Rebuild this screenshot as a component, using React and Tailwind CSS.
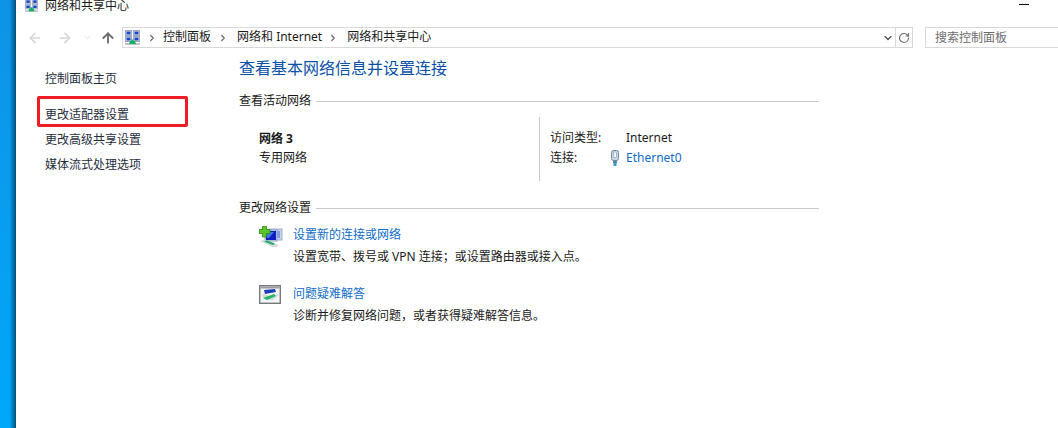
import { ArrowLeft, ArrowRight, ArrowUp, ChevronDown, ChevronRight, RotateCw } from "lucide-react";

const NetworkIcon = ({ className }) => (
  <svg viewBox="0 0 15 15" className={className}>
    <rect x="0.5" y="0.5" width="6" height="5" fill="#e4e9f3" stroke="#9aa6bd" />
    <rect x="1.5" y="1.5" width="4" height="3" fill="#1b46c4" />
    <rect x="8.5" y="0.5" width="6" height="5" fill="#e4e9f3" stroke="#9aa6bd" />
    <rect x="9.5" y="1.5" width="4" height="3" fill="#1b46c4" />
    <rect x="0.5" y="6.5" width="6" height="5" fill="#e4e9f3" stroke="#9aa6bd" />
    <rect x="1.5" y="7.5" width="4" height="3" fill="#1b46c4" />
    <rect x="8.5" y="6.5" width="6" height="5" fill="#e4e9f3" stroke="#9aa6bd" />
    <rect x="9.5" y="7.5" width="4" height="3" fill="#1b46c4" />
    <rect x="0" y="13" width="15" height="2" fill="#c2c6cb" />
    <path d="M6.5 9.5h2V11h1.5l1 3H4l1-3h1.5z" fill="#12b35c" />
  </svg>
);

const PlugIcon = ({ className }) => (
  <svg viewBox="0 0 10 16" className={className}>
    <rect x="1.5" y="0.5" width="7" height="10" rx="2" fill="#c9d6e6" stroke="#7389a8" />
    <rect x="3.5" y="2" width="3" height="5.5" fill="#f2f5f9" stroke="#8a9bb3" strokeWidth="0.6" />
    <rect x="3" y="10.5" width="4" height="2.5" fill="#5a83a8" />
    <rect x="3.5" y="13" width="3" height="3" fill="#2f9fd8" />
  </svg>
);

const NewConnectionIcon = ({ className }) => (
  <svg viewBox="0 0 24 21" className={className}>
    <rect x="11" y="3" width="12" height="11" fill="#c3d2ec" stroke="#9fb0cc" />
    <rect x="13" y="5" width="8" height="7" fill="#7f9fe0" />
    <rect x="6" y="4" width="12" height="11" fill="#d5def0" stroke="#8c9dbb" />
    <path d="M7 5h10v9H7z" fill="#0d1fc0" />
    <path d="M8 6h7l-5 6H8z" fill="#3f74ee" />
    <path d="M3.5 0h4v3.5H11v4H7.5V11h-4V7.5H0v-4h3.5z" fill="#57c728" stroke="#2c8a18" strokeWidth="0.8" />
    <path d="M1 15l4-1 15 5-3 2h-4z" fill="#d4d8dc" />
    <path d="M5 15.5l3-1 8 3-2 1.5z" fill="#1fae5e" />
  </svg>
);

const TroubleshootIcon = ({ className }) => (
  <svg viewBox="0 0 22 19" className={className}>
    <rect x="0.7" y="0.7" width="20.6" height="17.6" fill="#f4f5f6" stroke="#75797e" strokeWidth="1.4" />
    <rect x="1.5" y="1.5" width="19" height="2" fill="#9a9ea3" />
    <path d="M5 5l11-1 1 3-11 2z" fill="#1b3fb8" />
    <path d="M2 10l3-1 8 3 5-3 2 1-6 5H7z" fill="#d8dbdd" />
    <path d="M4 13l11-4 2 2-9 4z" fill="#22b866" />
  </svg>
);

const SideLink = ({ children, className = "" }) => (
  <a className={`block h-[17px] leading-[17px] text-[#1f2d3d] ${className}`}>{children}</a>
);

const SectionTitle = ({ children }) => (
  <div className="flex items-center gap-[5px] h-[17px] leading-[17px] w-[580px]">
    <span className="text-[#1a1a1a]">{children}</span>
    <div className="flex-1 h-px bg-[#c8c8c8] mt-[2px]" />
  </div>
);

const TaskRow = ({ icon, title, desc }) => (
  <div className="flex ml-[20px]">
    <div className="w-[34px] shrink-0">{icon}</div>
    <div>
      <div className="h-[17px] leading-[17px] text-[#0f6cc8]">{title}</div>
      <div className="h-[17px] leading-[17px] mt-[5px] text-[#1a1a1a]">{desc}</div>
    </div>
  </div>
);

export default function App() {
  return (
    <div
      className="flex w-[1058px] h-[428px] overflow-hidden bg-white text-[12px]"
      style={{ fontFamily: '"Noto Sans", "Noto Sans CJK SC", sans-serif' }}
    >
      {/* desktop strip */}
      <div className="w-[16px] shrink-0 bg-gradient-to-b from-[#0e93e6] to-[#00a8fa]">
        <div className="h-full bg-gradient-to-r from-transparent from-60% to-[#00507a]" />
      </div>

      <div className="flex-1 min-w-0">
        {/* title bar */}
        <div className="flex h-[12px] pl-[9px] pr-[29px]">
          <NetworkIcon className="w-[13px] h-[13px] -mt-[1px]" />
          <span className="ml-[7px] h-[12px] leading-[12px] text-[#1a1a1a]">网络和共享中心</span>
          <div className="ml-auto w-[10px] h-px bg-black mt-[4px]" />
        </div>

        {/* nav bar */}
        <div className="flex items-center h-[21px] mt-[15px]">
          <div className="flex items-center w-[106px] pl-[11px]">
            <ArrowLeft className="w-[16px] h-[16px] text-[#d6d6d6]" strokeWidth={2.4} />
            <ArrowRight className="w-[16px] h-[16px] ml-[14px] text-[#d6d6d6]" strokeWidth={2.4} />
            <ChevronDown className="w-[9px] h-[9px] ml-[10px] text-[#d6d6d6]" />
            <ArrowUp className="w-[16px] h-[16px] ml-[8px] text-[#6d6d6d]" strokeWidth={2.8} />
          </div>
          <div className="flex items-center w-[791px] h-[21px] border border-[#d9d9d9] leading-[17px]">
            <NetworkIcon className="ml-[2px] w-[15px] h-[15px]" />
            <ChevronRight className="ml-[7px] w-[10px] h-[10px] text-[#6d6d6d]" strokeWidth={3} />
            <span className="ml-[6px] -mt-[2px] text-[#1a1a1a]">控制面板</span>
            <ChevronRight className="ml-[7px] w-[10px] h-[10px] text-[#6d6d6d]" strokeWidth={3} />
            <span className="ml-[9px] -mt-[2px] text-[#1a1a1a]">网络和 Internet</span>
            <ChevronRight className="ml-[6px] w-[10px] h-[10px] text-[#6d6d6d]" strokeWidth={3} />
            <span className="ml-[9px] -mt-[2px] text-[#1a1a1a]">网络和共享中心</span>
            <ChevronDown className="ml-auto mr-[1px] w-[12px] h-[12px] text-[#5a5a5a]" strokeWidth={3} />
            <div className="flex items-center justify-center w-[17px] h-full border-l border-[#d9d9d9]">
              <RotateCw className="w-[12px] h-[12px] text-[#6d6d6d]" strokeWidth={2.4} />
            </div>
          </div>
          <div className="flex items-center flex-1 h-[21px] ml-[12px] pl-[9px] border border-r-0 border-[#d9d9d9] text-[#6d6d6d]">
            搜索控制面板
          </div>
        </div>

        <div className="flex">
          {/* sidebar */}
          <div className="relative w-[223px] shrink-0 pl-[29px] pt-[22px]">
            <SideLink>控制面板主页</SideLink>
            <SideLink className="mt-[19px]">更改适配器设置</SideLink>
            <SideLink className="mt-[8px]">更改高级共享设置</SideLink>
            <SideLink className="mt-[8px]">媒体流式处理选项</SideLink>
            <div className="absolute left-[21px] top-[48px] w-[151px] h-[31px] border-[3px] border-[#ee1c25] rounded-[2px]" />
          </div>

          {/* main */}
          <div className="pt-[9px]">
            <h1 className="h-[22px] leading-[22px] text-[16px] text-[#0a4fa8]">查看基本网络信息并设置连接</h1>
            <div className="mt-[13px]">
              <SectionTitle>查看活动网络</SectionTitle>
            </div>
            <div className="flex w-[580px] h-[64px] mt-[8px]">
              <div className="w-[300px] pl-[20px] pt-[12px]">
                <div className="h-[19px] leading-[19px] font-bold text-[#1a1a1a]">网络 3</div>
                <div className="h-[20px] leading-[20px] text-[#1a1a1a]">专用网络</div>
              </div>
              <div className="border-l border-[#c8c8c8] pl-[10px] pt-[11px] text-[#1a1a1a]">
                <div className="flex h-[20px] leading-[20px]">
                  <span className="w-[76px]">访问类型:</span>
                  <span>Internet</span>
                </div>
                <div className="flex items-center h-[20px] leading-[20px]">
                  <span className="w-[60px]">连接:</span>
                  <PlugIcon className="w-[10px] h-[16px]" />
                  <span className="ml-[6px] text-[#0f6cc8]">Ethernet0</span>
                </div>
              </div>
            </div>
            <div className="mt-[18px]">
              <SectionTitle>更改网络设置</SectionTitle>
            </div>
            <div className="mt-[10px]">
              <TaskRow
                icon={<NewConnectionIcon className="w-[24px] h-[21px]" />}
                title="设置新的连接或网络"
                desc="设置宽带、拨号或 VPN 连接；或设置路由器或接入点。"
              />
            </div>
            <div className="mt-[20px]">
              <TaskRow
                icon={<TroubleshootIcon className="w-[22px] h-[19px]" />}
                title="问题疑难解答"
                desc="诊断并修复网络问题，或者获得疑难解答信息。"
              />
            </div>
          </div>
        </div>
      </div>
    </div>
  );
}
